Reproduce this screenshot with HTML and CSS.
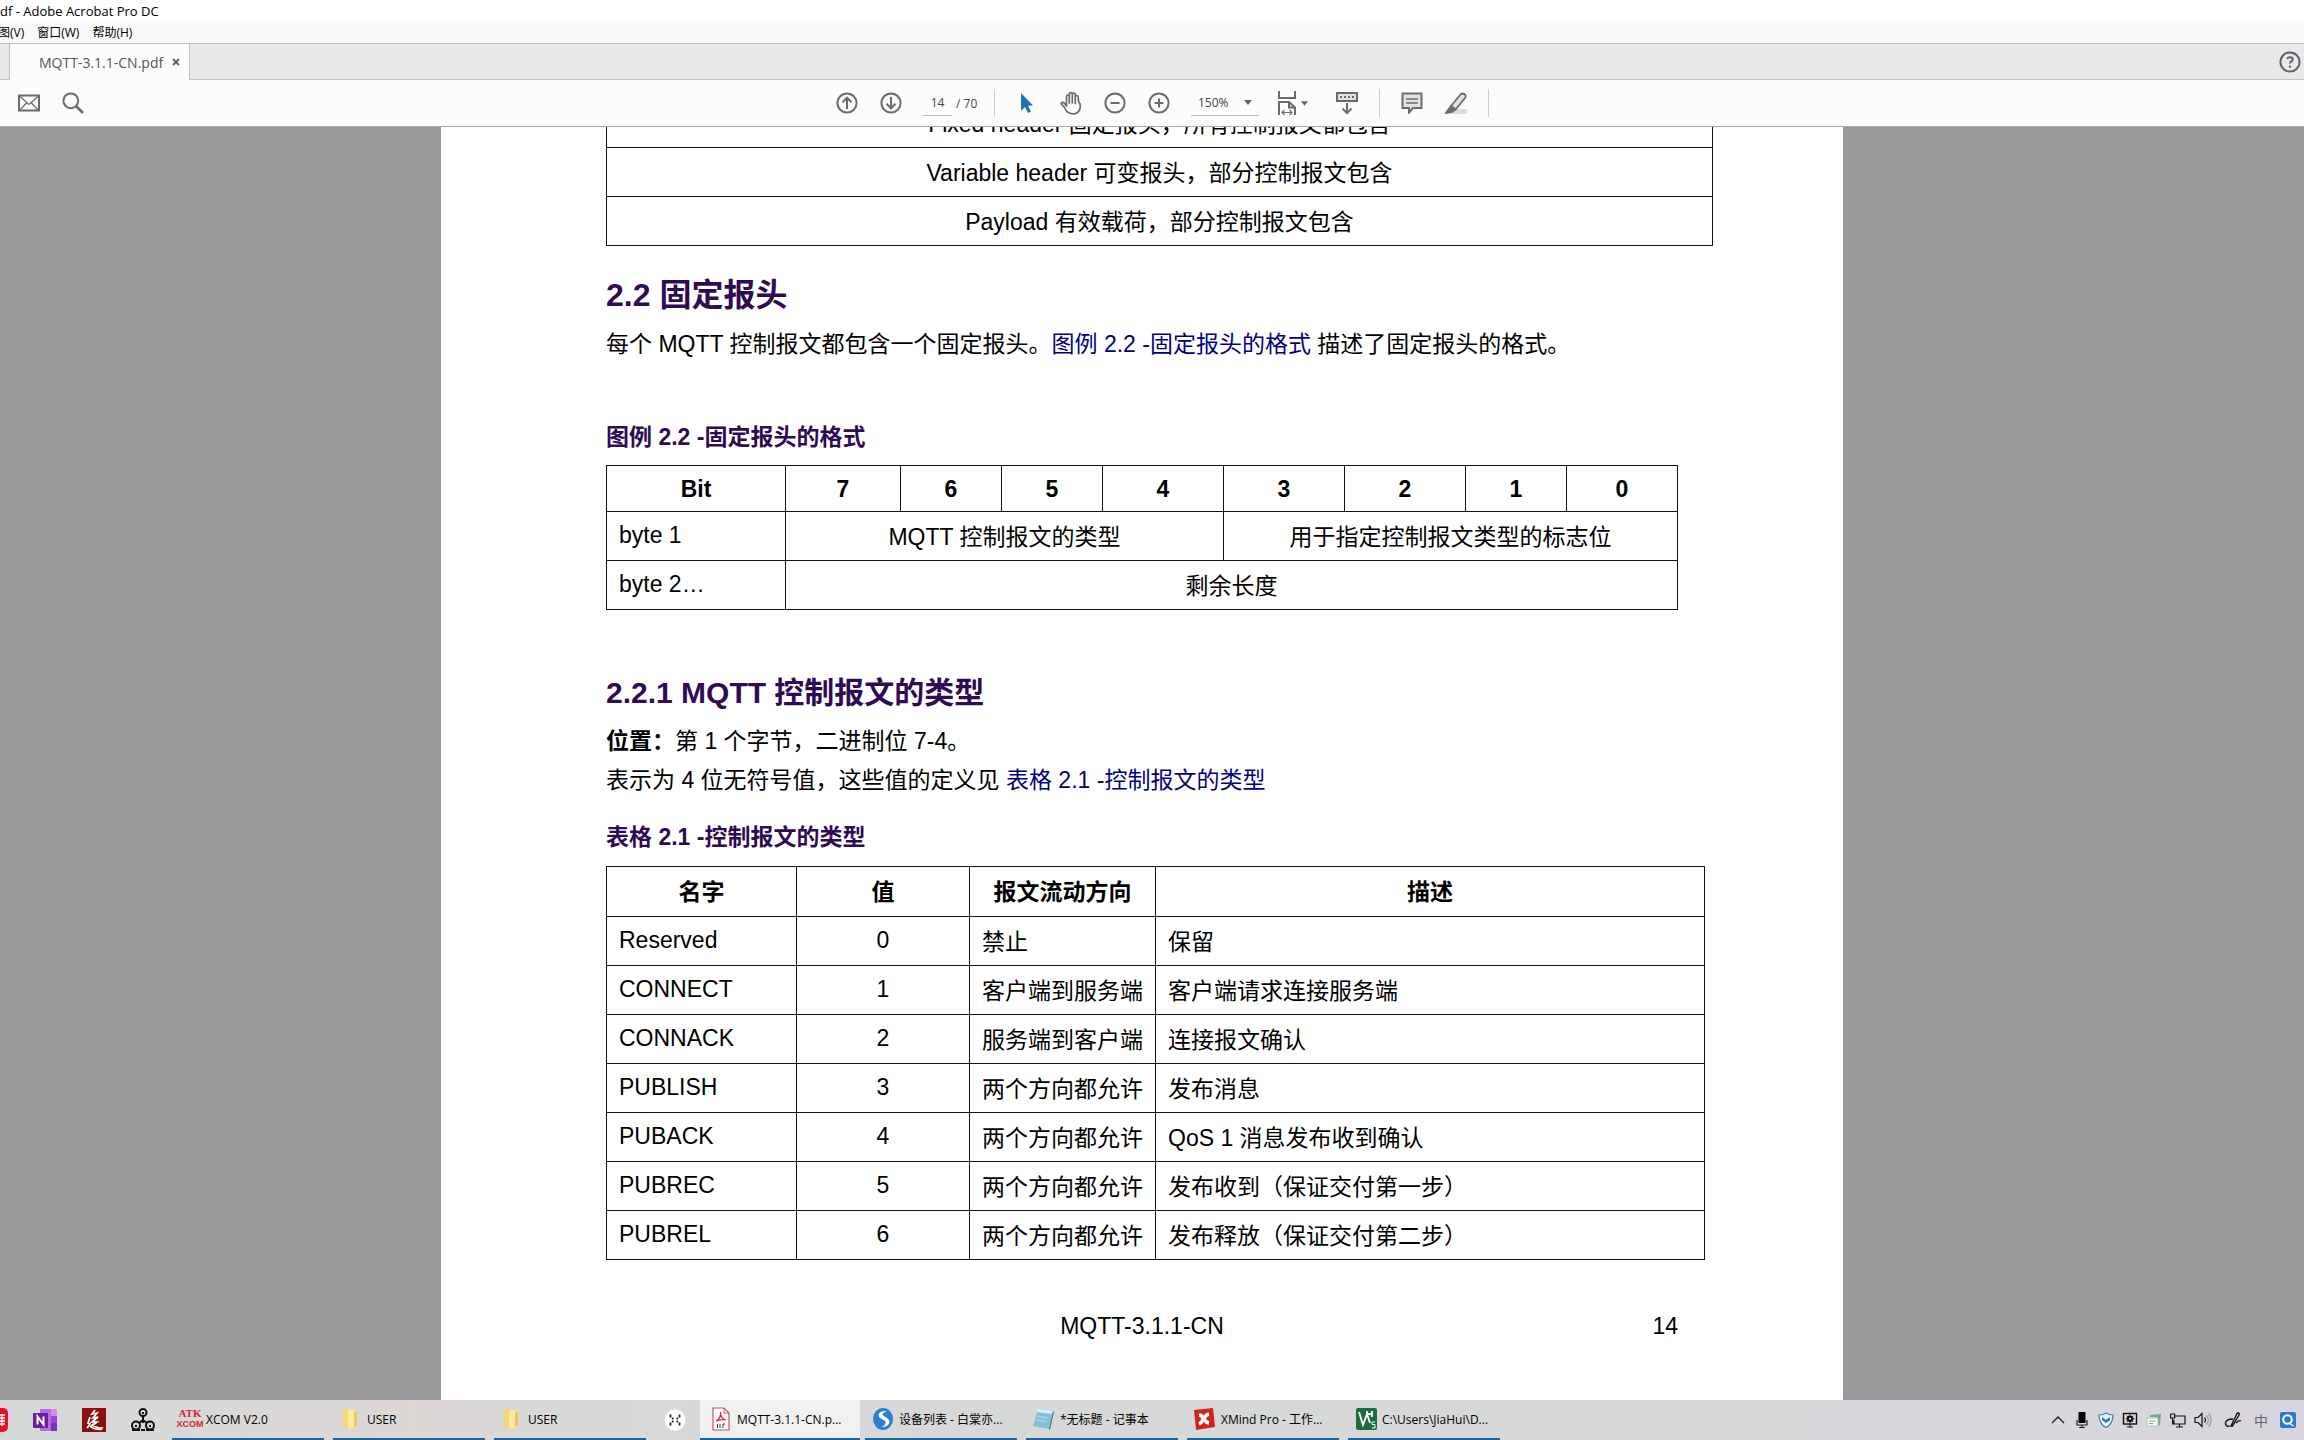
FILE: index.html
```html
<!DOCTYPE html>
<html lang="zh-CN">
<head>
<meta charset="utf-8">
<title>MQTT-3.1.1-CN.pdf - Adobe Acrobat Pro DC</title>
<link rel="stylesheet" href="styles.css">
</head>
<body>
<header class="titlebar">df - Adobe Acrobat Pro DC</header>
<nav class="menubar">
  <button type="button">图(V)</button>
  <button type="button">窗口(W)</button>
  <button type="button">帮助(H)</button>
</nav>
<div class="tabs">
  <div class="tab"><span>MQTT-3.1.1-CN.pdf</span>
    <button type="button" class="tab-close" aria-label="关闭"><svg width="8" height="8" viewBox="0 0 8 8"><path d="M1 1l6 6M7 1L1 7" stroke="#666" stroke-width="2"/></svg></button>
  </div>
  <button type="button" class="help" aria-label="帮助"><svg width="22" height="22" viewBox="0 0 22 22" fill="none" stroke="#636066" stroke-width="2"><circle cx="11" cy="11" r="9.6"/><path d="M8.3 8.2c.4-2.600 5.400-2.500 5.400.2 0 2-2.700 1.900-2.700 4"/><path d="M11 14.500v2.200"/></svg></button>
</div>
<div class="toolbar">
  <div class="tools tools-left">
    <button type="button" aria-label="邮件"><svg width="22" height="22" viewBox="0 0 22 22" fill="none" stroke="#6b6b6d"><rect x="1" y="3.500" width="20" height="15" stroke-width="2"/><path d="M2 4.500l9 8 9-8M2 18l6.500-7M20 18l-6.500-7" stroke-width="1.200"/></svg></button>
    <button type="button" aria-label="查找"><svg width="22" height="22" viewBox="0 0 22 22" fill="none" stroke="#6b6b6d"><circle cx="8.800" cy="8.800" r="7.400" stroke-width="2"/><path d="M14 14l7 7" stroke-width="2.600"/></svg></button>
  </div>
  <div class="tools">
    <button type="button" aria-label="上一页"><svg width="22" height="22" viewBox="0 0 22 22" fill="none" stroke="#6b6b6d" stroke-width="2"><circle cx="11" cy="11" r="9.600"/><path d="M11 17V6M6.500 10.200L11 5.700l4.500 4.500"/></svg></button>
    <button type="button" aria-label="下一页"><svg width="22" height="22" viewBox="0 0 22 22" fill="none" stroke="#6b6b6d" stroke-width="2"><circle cx="11" cy="11" r="9.600"/><path d="M11 5v11M6.500 11.800l4.500 4.500 4.500-4.500"/></svg></button>
    <input class="page-no" type="text" value="14" aria-label="页码">
    <span class="page-count">/ 70</span>
    <i class="sep"></i>
    <button type="button" aria-label="选择"><svg width="22" height="22" viewBox="0 0 22 22"><path d="M5 1l12 12.500-5 .2 3 5.800-3 1.500-3-6L5 19z" fill="#2072bb"/></svg></button>
    <button type="button" aria-label="手形"><svg width="24" height="24" viewBox="0 0 24 24" fill="#fff" stroke="#6b6b6d" stroke-width="1.700" stroke-linejoin="round" stroke-linecap="round"><path d="M7.500 15V5.500c0-2 2.800-2 2.800 0V12 3c0-2 3-2 3 0v9V3.500c0-2 3-2 3 0V12.500 6c0-2 2.900-2 2.900 0 0 3 .8 6 2 7 .8 6-2.200 9.800-7.200 9.800-5.500 0-7-3-8.500-6.300L2 12.500c1-1.800 2.800-1.200 4 .5z"/></svg></button>
    <button type="button" aria-label="缩小"><svg width="22" height="22" viewBox="0 0 22 22" fill="none" stroke="#6b6b6d" stroke-width="2"><circle cx="11" cy="11" r="9.600"/><path d="M6.500 11h9"/></svg></button>
    <button type="button" aria-label="放大"><svg width="22" height="22" viewBox="0 0 22 22" fill="none" stroke="#6b6b6d" stroke-width="2"><circle cx="11" cy="11" r="9.600"/><path d="M6.500 11h9M11 6.500v9"/></svg></button>
    <span class="zoom"><select aria-label="缩放"><option>150%</option></select><svg width="8" height="5" viewBox="0 0 8 5"><path d="M0 0h8L4 5z" fill="#666"/></svg></span>
    <button type="button" class="fit" aria-label="适合宽度"><svg width="18" height="24" viewBox="0 0 18 24" fill="none" stroke="#6b6b6d" stroke-width="2"><path d="M1 0v7h16V0M1 24V11h10l6 5.500V24M11 11v5.500h6"/><path d="M4 21.500h10M6.500 19L4 21.500 6.500 24M11.500 19l2.500 2.500-2.500 2.500" stroke-width="1.200"/></svg><svg width="7" height="5" viewBox="0 0 8 5"><path d="M0 0h8L4 5z" fill="#666"/></svg></button>
    <button type="button" aria-label="滚动"><svg width="22" height="24" viewBox="0 0 22 24" fill="none" stroke="#6b6b6d" stroke-width="2"><rect x="1" y="2" width="20" height="8" fill="#e2e2e4"/><path d="M4 6h14" stroke-dasharray="2 2"/><path d="M11 12v9.500M6.500 17.500L11 22l4.500-4.500"/></svg></button>
    <i class="sep"></i>
    <button type="button" aria-label="添加附注"><svg width="22" height="22" viewBox="0 0 22 22" fill="#e2e2e4" stroke="#6b6b6d" stroke-width="2"><path d="M1.500 1.500h19V16H12l-4 4.500V16H1.500z"/><path d="M5 7h12M5 11h12" stroke-width="1.500"/></svg></button>
    <button type="button" aria-label="高亮"><svg width="22" height="22" viewBox="0 0 22 22" stroke="#6b6b6d" stroke-width="1.800"><path d="M9 17h13v5H4z" fill="#ddd" stroke="none"/><path d="M6 14L15.500 2.500c2-2.200 7 0 4.500 3.500l-9.500 11.500z" fill="#e2e2e4"/><path d="M6 14l-5 7 6-1 3.500-2.500z" fill="#6b6b6d"/></svg></button>
    <i class="sep"></i>
  </div>
</div>

<main class="viewer">
  <article class="page">
    <table class="grid layers">
      <tr><td>Fixed header 固定报头，所有控制报文都包含</td></tr>
      <tr><td>Variable header 可变报头，部分控制报文包含</td></tr>
      <tr><td>Payload 有效载荷，部分控制报文包含</td></tr>
    </table>
    <h1>2.2 固定报头</h1>
    <p>每个 MQTT 控制报文都包含一个固定报头。<a href="#fig22">图例 2.2 -固定报头的格式</a> 描述了固定报头的格式。</p>
    <table class="grid bits" id="fig22">
      <caption>图例 2.2 -固定报头的格式</caption>
      <colgroup><col class="b-label"><col class="b7"><col class="b6"><col class="b5"><col class="b4"><col class="b3"><col class="b2"><col class="b1"><col></colgroup>
      <tr><th>Bit</th><th>7</th><th>6</th><th>5</th><th>4</th><th>3</th><th>2</th><th>1</th><th>0</th></tr>
      <tr><td class="key">byte 1</td><td colspan="4">MQTT 控制报文的类型</td><td colspan="4">用于指定控制报文类型的标志位</td></tr>
      <tr><td class="key">byte 2…</td><td colspan="8">剩余长度</td></tr>
    </table>
    <h2>2.2.1 MQTT 控制报文的类型</h2>
    <p><b>位置：</b>第 1 个字节，二进制位 7-4。</p>
    <p>表示为 4 位无符号值，这些值的定义见 <a href="#tab21">表格 2.1 -控制报文的类型</a></p>
    <table class="grid types" id="tab21">
      <caption>表格 2.1 -控制报文的类型</caption>
      <colgroup><col class="t-name"><col class="t-value"><col class="t-dir"><col></colgroup>
      <tr><th>名字</th><th>值</th><th>报文流动方向</th><th>描述</th></tr>
      <tr><td class="key">Reserved</td><td class="num">0</td><td>禁止</td><td>保留</td></tr>
      <tr><td class="key">CONNECT</td><td class="num">1</td><td>客户端到服务端</td><td>客户端请求连接服务端</td></tr>
      <tr><td class="key">CONNACK</td><td class="num">2</td><td>服务端到客户端</td><td>连接报文确认</td></tr>
      <tr><td class="key">PUBLISH</td><td class="num">3</td><td>两个方向都允许</td><td>发布消息</td></tr>
      <tr><td class="key">PUBACK</td><td class="num">4</td><td>两个方向都允许</td><td>QoS 1 消息发布收到确认</td></tr>
      <tr><td class="key">PUBREC</td><td class="num">5</td><td>两个方向都允许</td><td>发布收到（保证交付第一步）</td></tr>
      <tr><td class="key">PUBREL</td><td class="num">6</td><td>两个方向都允许</td><td>发布释放（保证交付第二步）</td></tr>
    </table>
    <footer class="page-foot"><span>MQTT-3.1.1-CN</span><span class="folio">14</span></footer>
  </article>
</main>

<div class="taskbar">
  <div class="pinned">
    <button type="button" class="cut" aria-label="应用"><svg width="24" height="24" viewBox="0 0 24 24"><rect width="24" height="24" rx="5" fill="#e8102c"/><path d="M15 7h6M15 10h6M15 13h6M15 16h6M18 6v12" stroke="#fff" stroke-width="1.300"/></svg></button>
    <button type="button" aria-label="OneNote"><svg width="24" height="24" viewBox="0 0 24 24"><path d="M7 1h17v22H7z" fill="#b66be0"/><path d="M18 1h6v7h-6z" fill="#d08af0"/><path d="M18 8h6v7h-6z" fill="#9a48cf"/><path d="M18 15h6v8h-6z" fill="#7b2fb5"/><rect y="5" width="15" height="15" rx="1" fill="#6a1f9c"/><path d="M4.500 16.500v-8l6 8v-8" fill="none" stroke="#fff" stroke-width="2"/></svg></button>
    <button type="button" aria-label="游戏"><svg width="24" height="24" viewBox="0 0 24 24"><rect width="24" height="24" fill="#8d0f12"/><path d="M13 2l-3 4 5-1-4 5 5-1-6 5 5 0-7 5M8 9l-2 6 2 1-3 4M10 16c2 3 5 4 10 4l-1 1.500c-5 0-8-.5-10-3" fill="none" stroke="#fff" stroke-width="1.700"/></svg></button>
    <button type="button" aria-label="节点工具"><svg width="24" height="24" viewBox="0 0 24 24" fill="none" stroke="#111" stroke-width="2"><circle cx="12" cy="4.500" r="3.500"/><circle cx="5" cy="17.500" r="4"/><circle cx="19" cy="17.500" r="4"/><path d="M12 8v7M8 15l4-3 4 3M10 22h4M1 22h8M15 22h8M11 5h2M4 18h2M18 18h2"/></svg></button>
  </div>
  <button type="button" class="task"><span class="atk"><b>ATK</b><b class="atk-name">XCOM</b></span><span>XCOM V2.0</span></button>
  <button type="button" class="task"><svg width="24" height="24" viewBox="0 0 24 24"><path d="M4 3l6-1v20l-6-2z" fill="#f5d77b"/><path d="M9 3h8v18l-8 1z" fill="#ffe9a0"/><path d="M15 4l3 1v13l-3 3z" fill="#eec75c"/></svg><span>USER</span></button>
  <button type="button" class="task"><svg width="24" height="24" viewBox="0 0 24 24"><path d="M4 3l6-1v20l-6-2z" fill="#f5d77b"/><path d="M9 3h8v18l-8 1z" fill="#ffe9a0"/><path d="M15 4l3 1v13l-3 3z" fill="#eec75c"/></svg><span>USER</span></button>
  <button type="button" class="round" aria-label="应用"><svg width="22" height="22" viewBox="0 0 22 22"><circle cx="11" cy="11" r="10.500" fill="#fff"/><path d="M6.500 5.500v3M6.500 13.500v3M15.500 5.500v3M15.500 13.500v3M8 9l1.500 1M14 9l-1.500 1M8 13l1.500-1M14 13l-1.500-1" stroke="#222" stroke-width="1.800"/></svg></button>
  <button type="button" class="task active"><svg width="18" height="24" viewBox="0 0 18 24"><path d="M1 1h11l5 5v17H1z" fill="#fff" stroke="#c9564f" stroke-width="1.200"/><path d="M12 1v5h5" fill="none" stroke="#c9564f"/><path d="M4 14c3-1 5-5 4.500-9 0 4 2 7 5.500 8-3-1-7 0-10 1z" fill="none" stroke="#d92b20" stroke-width="1.200"/><path d="M5.500 21v-4M8 21v-4M11 21v-4h2" stroke="#333" fill="none"/></svg><span>MQTT-3.1.1-CN.p...</span></button>
  <button type="button" class="task"><svg width="24" height="24" viewBox="0 0 24 24"><ellipse cx="12" cy="12" rx="10" ry="11" fill="#2c7fd6"/><path d="M16 4C8 3 5 9 10 11.500s7 4 1 8.500c7 0 10-6 5-9s-7-4 0-7z" fill="#fff"/></svg><span>设备列表 - 白棠亦...</span></button>
  <button type="button" class="task"><svg width="24" height="24" viewBox="0 0 24 24"><path d="M6 2l15 2-4 18-16-3z" fill="#7fc3d6"/><path d="M6 2l15 2-1 3L5 5z" fill="#d9f1f6"/><path d="M21 4l1 1-4 18-1-1z" fill="#4a7480"/><path d="M5 9l11 2M4 13l11 2" stroke="#b6e2ec"/></svg><span>*无标题 - 记事本</span></button>
  <button type="button" class="task"><svg width="24" height="24" viewBox="0 0 24 24"><path d="M1 3l19-2 2 19-19 3z" fill="#d3221f"/><path d="M6 8c5 0 4 7 10 8M16 7c-6 1-5 8-10 10" stroke="#fff" stroke-width="3.500" fill="none"/></svg><span>XMind Pro - 工作...</span></button>
  <button type="button" class="task"><svg width="24" height="24" viewBox="0 0 24 24"><rect x="2" y="1" width="21" height="22" rx="2" fill="#1f6b3a"/><path d="M5 5l4 13 4-11 3 9M13 4v6M18 4v6M13 7h5" stroke="#fff" stroke-width="1.800" fill="none"/><path d="M21 15h-3v2.500h3V21h-3" stroke="#fff" fill="none"/></svg><span>C:\Users\JiaHui\D...</span></button>
  <div class="tray">
    <svg width="16" height="16" viewBox="0 0 16 16"><path d="M2 11l6-6 6 6" fill="none" stroke="#222" stroke-width="1.400"/></svg>
    <svg width="16" height="16" viewBox="0 0 16 16"><rect x="4.500" width="7" height="11" fill="#000"/><path d="M3 8v5h10V8M8 13v3M5 15.500h6" fill="none" stroke="#222" stroke-width="1.200"/></svg>
    <svg width="16" height="16" viewBox="0 0 16 16"><path d="M8 1c2 1.500 4 2 7 2 0 6-2 10-7 12.500C3 13 1 9 1 3c3 0 5-.5 7-2z" fill="#e7f1f8" stroke="#3b7fb0" stroke-width="1.200"/><path d="M4 5l4 3 4-3v3l-4 3-4-3z" fill="#2d77ad"/></svg>
    <svg width="16" height="16" viewBox="0 0 16 16" fill="none" stroke="#111"><rect x="1.500" y="1.500" width="13" height="10.500" stroke-width="1.400"/><circle cx="8" cy="6.800" r="2.200" stroke-width="2"/><path d="M8 2.500v8.600M3.700 6.800h8.600M5 3.800l6 6M11 3.800l-6 6M8 12v3M5 15h6"/><circle cx="8" cy="6.800" r="1" fill="#fff" stroke="none"/></svg>
    <svg width="16" height="16" viewBox="0 0 16 16"><path d="M4 3l11-1-1 11-3 1V5H4z" fill="#7ba58e"/><path d="M1 6h11v8H1z" fill="#f4faf6" stroke="#a9c8b6"/><path d="M3 9h6M3 11.500h4" stroke="#7ba58e"/></svg>
    <svg width="16" height="16" viewBox="0 0 16 16" fill="none" stroke="#111" stroke-width="1.200"><path d="M5 4h10v8H4V8M9.500 12v3M6 15h7M.6 2h4v4h-4zM2.600 6v6H4"/></svg>
    <svg width="18" height="16" viewBox="0 0 18 16" fill="none" stroke="#111" stroke-width="1.200"><path d="M1 5.500h3l4-4v13l-4-4H1zM10.500 5.500c1.200 1.200 1.200 4 0 5"/><path d="M12.500 3.500c2.500 2.500 2.500 7 0 9M14.500 1.500c3.500 3.500 3.500 10 0 13" stroke="#999"/></svg>
    <svg class="pen" width="18" height="16" viewBox="0 0 18 16" fill="none" stroke="#111" stroke-width="1.400"><path d="M7 14L13 1.500c1-1.500 3 0 2 1.500L8.500 14zM9 7c-3 0-7 1-7.500 4s2 3.500 4 3M12 11c2-2 4-3 5-2"/></svg>
    <span class="ime">中</span>
    <svg width="16" height="16" viewBox="0 0 16 16"><rect width="16" height="16" rx="2" fill="#2b79c8"/><circle cx="7.500" cy="7.500" r="4.300" fill="none" stroke="#fff" stroke-width="2"/><path d="M10.500 12l3 2" stroke="#fff" stroke-width="1.500"/></svg>
  </div>
</div>
</body>
</html>
```

FILE: styles.css
```css
* { box-sizing: border-box; }

body {
  margin: 0;
  height: 100vh;
  display: flex;
  flex-direction: column;
  overflow: hidden;
  background: #fcfcfd;
  color: #000;
  font-family: "Open Sans", "Noto Sans CJK SC", sans-serif;
  font-size: 12px;
}

button {
  padding: 0;
  border: 0;
  background: none;
  font: inherit;
  color: inherit;
}

svg { display: block; flex: none; }

/* Window chrome */
.titlebar {
  height: 23px;
  line-height: 23px;
  background: #fff;
  font-size: 13px;
  white-space: nowrap;
}

.menubar {
  display: flex;
  gap: 13px;
  height: 20px;
  margin-left: -2px;
  background: #f9f9fa;
}

.menubar button { line-height: 20px; white-space: nowrap; }

.tabs {
  display: flex;
  justify-content: space-between;
  height: 37px;
  padding: 0 3px 0 9px;
  background: #eae8eb;
  box-shadow: inset 0 1px #c3c1c5, inset 0 -1px #c3c1c5;
}

.tab {
  display: flex;
  align-items: center;
  gap: 9px;
  width: 181px;
  padding-left: 29px;
  border: solid #c3c1c5;
  border-width: 1px 1px 0;
  background: #fcfcfd;
  color: #555;
  font-size: 14px;
}

.toolbar {
  display: grid;
  grid-template-columns: 1fr auto 1fr;
  align-items: center;
  height: 47px;
  padding-left: 20px;
  border-bottom: 1px solid #aaa;
  background: #fcfcfd;
}

.tools {
  display: flex;
  align-items: center;
  grid-column: 2;
  grid-row: 1;
}

.tools-left { grid-column: 1; margin-left: -13px; }

.tools button {
  display: flex;
  align-items: center;
  justify-content: center;
  width: 44px;
  height: 44px;
}

.sep { width: 1px; height: 28px; margin: 0 10px; background: #ccc; }

.page-no {
  width: 29px;
  height: 26px;
  margin: 0 4px 0 10px;
  padding: 0;
  border: 0;
  border-bottom: 1px solid #bbb;
  background: none;
  color: #444;
  font: inherit;
  text-align: center;
}

.page-count { width: 28px; color: #444; }

.zoom {
  display: flex;
  align-items: center;
  width: 68px;
  height: 26px;
  margin: 0 9px 0 10px;
  padding: 0 7px;
  border-bottom: 1px solid #bbb;
}

.zoom select {
  flex: 1;
  min-width: 0;
  padding: 0;
  border: 0;
  appearance: none;
  background: none;
  color: #444;
  font: inherit;
}

.tools .fit { gap: 5px; width: 49px; margin-right: 8px; }

/* Document */
.viewer {
  flex: 1;
  min-height: 0;
  display: flex;
  justify-content: center;
  padding-right: 20px;
  overflow: hidden;
  background: #99999b;
}

.page {
  flex: 0 0 1402px;
  min-width: 0;
  padding: 0 165px;
  background: #fff;
  font-family: "Liberation Sans", "Noto Sans CJK SC", sans-serif;
  font-size: 23px;
  line-height: 39px;
}

.page p { margin: 0; }
.page a { color: #00007f; text-decoration: none; }

.page h1,
.page h2 {
  margin: 25px 0 6px;
  color: #2f0a55;
  font-size: 32px;
  line-height: 48px;
}

.page h2 { margin: 59px 0 5px; font-size: 30px; }

.grid {
  width: 100%;
  border-collapse: collapse;
  table-layout: fixed;
  line-height: 32px;
}

.grid td,
.grid th {
  height: 49px;
  padding: 1px 12px 0;
  border: 1px solid #111;
  white-space: nowrap;
}

.grid caption {
  margin: 18px 0 9px;
  color: #2f0a55;
  font-weight: bold;
  line-height: 39px;
  text-align: left;
}

.grid .key { padding: 0 12px 3px; text-align: left; }

.grid.layers { width: 1107px; margin-top: -29px; text-align: center; }

.bits { text-align: center; }
.grid.bits caption { margin: 54px 0 8px; }
.grid.bits th { height: 46px; }
.b-label { width: 179px; }
.b7 { width: 115px; }
.b6, .b5, .b1 { width: 101px; }
.b4, .b3, .b2 { width: 121px; }

.grid.types { width: 1099px; }
.grid.types th { height: 50px; }
.t-name { width: 190px; }
.t-value { width: 173px; }
.t-dir { width: 186px; }
.grid .num { padding: 0 12px 3px; text-align: center; }

.page-foot {
  display: grid;
  grid-template-columns: 1fr auto 1fr;
  margin-top: 47px;
}

.page-foot span:first-child { grid-column: 2; }
.folio { text-align: right; }

/* Taskbar */
.taskbar {
  display: flex;
  align-items: stretch;
  height: 40px;
  background: linear-gradient(90deg, #d6d9d9, #ddd7d6 18%, #d8d9d9 28%, #d6d9d8 60%, #d9d6db 85%, #d9d5de);
  white-space: nowrap;
}

.pinned {
  display: flex;
  align-items: center;
  gap: 25px;
  margin-right: 17px;
}

.cut { margin-left: -16px; }

.task {
  display: flex;
  align-items: center;
  gap: 4px;
  width: 152px;
  margin-right: 9px;
  padding-left: 6px;
  border-bottom: 2px solid #1d65a0;
}

.task.active { width: 160px; margin-right: 5px; padding-left: 12px; gap: 7px; background: #f1f1f1; }

.atk {
  display: flex;
  flex-direction: column;
  align-items: center;
  width: 24px;
  color: #d8232f;
  font: 11px/11px "Liberation Serif", serif;
}

.atk-name { font: bold 9px/11px "Liberation Sans", sans-serif; }

.round { margin: 0 14px 0 9px; }

.tray {
  display: flex;
  align-items: center;
  gap: 8px;
  margin-left: auto;
  padding-right: 8px;
}

.pen { margin-left: 4px; }
.ime { margin: 0 4px; color: #666; font-size: 14px; }
```
